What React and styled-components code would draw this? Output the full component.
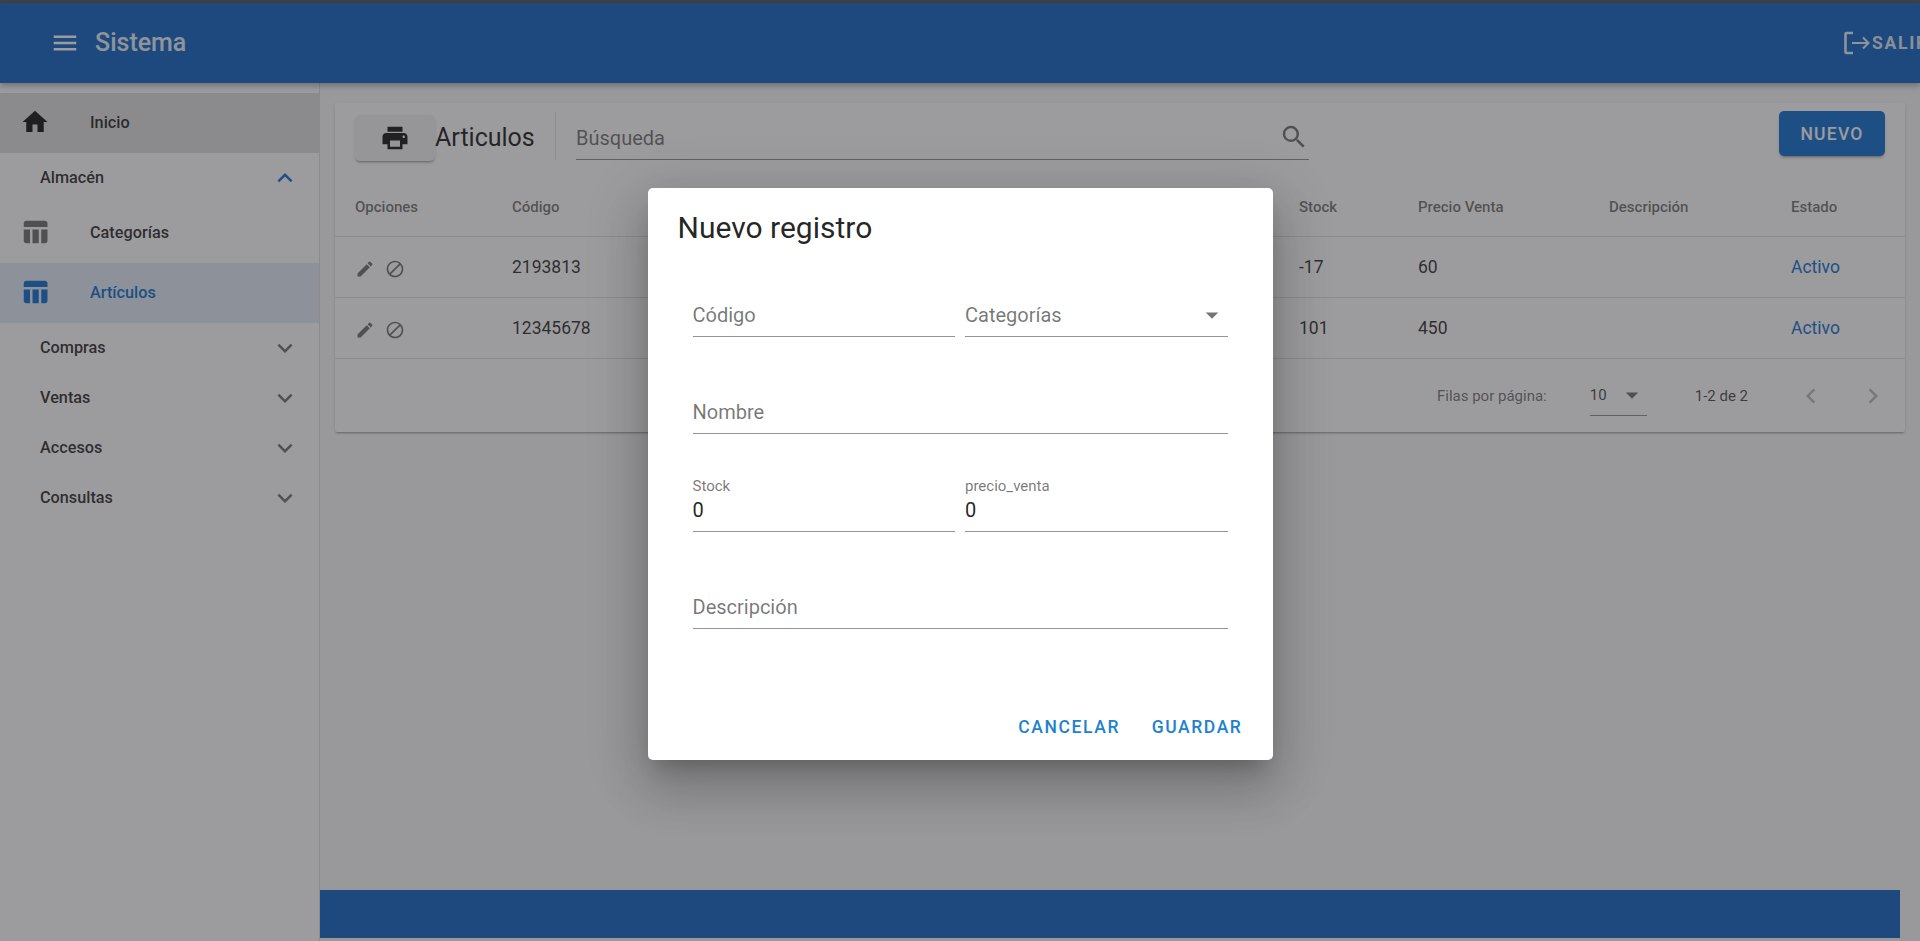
import React from 'react';
import styled, { createGlobalStyle } from 'styled-components';
import {
  MdMenu,
  MdHome,
  MdTableChart,
  MdPrint,
  MdSearch,
  MdEdit,
  MdBlock,
  MdExpandLess,
  MdExpandMore,
  MdArrowDropDown,
  MdChevronLeft,
  MdChevronRight,
} from 'react-icons/md';

const PRIMARY = '#1976d2';
const BAR = '#186bc6';

const rows = [
  { code: '2193813', stock: '-17', price: '60' },
  { code: '12345678', stock: '101', price: '450' },
];

const groups = ['Compras', 'Ventas', 'Accesos', 'Consultas'];

function App() {
  return (
    <Page>
      <GlobalStyle />
      <TopStrip />
      <AppBar>
        <MenuIcon />
        <Brand>Sistema</Brand>
        <Exit>
          <svg width="27" height="26" viewBox="0 0 27 26" fill="none" stroke="currentColor">
            <path d="M10 3H3.5a1 1 0 0 0-1 1v18a1 1 0 0 0 1 1H10" strokeWidth="2.6" />
            <path d="M9 13h16M20 7.5l5.5 5.5-5.5 5.5" strokeWidth="2" />
          </svg>
          <ExitLabel>SALIR</ExitLabel>
        </Exit>
      </AppBar>
      <Body>
        <Sidebar>
          <NavTile $tone="grey">
            <NavIcon $tone="dark"><MdHome /></NavIcon>
            Inicio
          </NavTile>
          <GroupHeader>
            Almacén
            <GroupArrow $open><MdExpandLess /></GroupArrow>
          </GroupHeader>
          <NavTile>
            <NavIcon><MdTableChart /></NavIcon>
            Categorías
          </NavTile>
          <NavTile $tone="active">
            <NavIcon $tone="active"><MdTableChart /></NavIcon>
            Artículos
          </NavTile>
          {groups.map((g) => (
            <GroupHeader key={g}>
              {g}
              <GroupArrow><MdExpandMore /></GroupArrow>
            </GroupHeader>
          ))}
        </Sidebar>
        <Main>
          <Card>
            <Toolbar>
              <PrintButton><MdPrint /></PrintButton>
              <ToolbarTitle>Articulos</ToolbarTitle>
              <ToolbarDivider />
              <Search>
                <SearchInput placeholder="Búsqueda" />
                <SearchIcon />
              </Search>
              <NewButton>NUEVO</NewButton>
            </Toolbar>
            <HeadRow>
              <span>Opciones</span>
              <span>Código</span>
              <span>Stock</span>
              <span>Precio Venta</span>
              <span>Descripción</span>
              <span>Estado</span>
            </HeadRow>
            {rows.map((r) => (
              <DataRow key={r.code}>
                <Actions>
                  <MdEdit size={20} />
                  <MdBlock size={20} />
                </Actions>
                <span>{r.code}</span>
                <span>{r.stock}</span>
                <span>{r.price}</span>
                <span />
                <Status>Activo</Status>
              </DataRow>
            ))}
            <Pagination>
              <span>Filas por página:</span>
              <PageSize>
                10
                <MdArrowDropDown size={30} />
              </PageSize>
              <PageRange>1-2 de 2</PageRange>
              <PageArrows>
                <MdChevronLeft size={30} />
                <MdChevronRight size={30} />
              </PageArrows>
            </Pagination>
          </Card>
          <Footer />
        </Main>
      </Body>
      <Overlay>
        <Dialog>
          <DialogTitle>Nuevo registro</DialogTitle>
          <Form>
            <Field>
              <FieldInput placeholder="Código" />
            </Field>
            <Field>
              <FieldInput placeholder="Categorías" />
              <SelectArrow><MdArrowDropDown /></SelectArrow>
            </Field>
            <Field $wide>
              <FieldInput placeholder="Nombre" />
            </Field>
            <Field>
              <FieldLabel>Stock</FieldLabel>
              <FieldInput defaultValue="0" />
            </Field>
            <Field>
              <FieldLabel>precio_venta</FieldLabel>
              <FieldInput defaultValue="0" />
            </Field>
            <Field $wide>
              <FieldInput placeholder="Descripción" />
            </Field>
          </Form>
          <DialogActions>
            <TextButton>CANCELAR</TextButton>
            <TextButton>GUARDAR</TextButton>
          </DialogActions>
        </Dialog>
      </Overlay>
    </Page>
  );
}

export default App;

const GlobalStyle = createGlobalStyle`
  html, body {
    margin: 0;
    height: 100%;
    overflow: hidden;
  }
  body {
    font-family: Roboto, "Liberation Sans", sans-serif;
    background: #fafafa;
  }
  * {
    box-sizing: border-box;
  }
`;

const Page = styled.div`
  position: relative;
  display: flex;
  flex-direction: column;
  width: 1920px;
  height: 941px;
  overflow: hidden;
  background: #fafafa;
  color: rgba(0, 0, 0, 0.87);
`;

const TopStrip = styled.div`
  flex: none;
  height: 3px;
  background: #595a5c;
`;

const AppBar = styled.header`
  flex: none;
  position: relative;
  display: flex;
  align-items: center;
  height: 80px;
  padding-left: 50px;
  background: ${BAR};
  color: #fff;
  box-shadow: 0 3px 6px rgba(0, 0, 0, 0.3);
  z-index: 2;
`;

const MenuIcon = styled(MdMenu)`
  width: 30px;
  height: 30px;
`;

const Brand = styled.div`
  margin: -2px 0 0 15px;
  font-size: 25px;
  font-weight: 500;
  opacity: 0.9;
`;

const Exit = styled.div`
  display: flex;
  align-items: center;
  flex: none;
  gap: 2px;
  margin-left: auto;
  width: 77px;
  overflow: hidden;
  font-size: 17.5px;
  font-weight: 700;
  letter-spacing: 1.75px;
  opacity: 0.9;

  svg {
    flex: none;
  }
`;

const ExitLabel = styled.span`
  flex: none;
  opacity: 0.95;
`;

const Body = styled.div`
  flex: 1;
  display: flex;
  min-height: 0;
`;

const Sidebar = styled.nav`
  flex: none;
  width: 320px;
  padding-top: 10px;
  background: #fff;
  border-right: 1px solid rgba(0, 0, 0, 0.12);
`;

const NavTile = styled.div`
  display: flex;
  align-items: center;
  height: 60px;
  padding: 0 0 2px 20px;
  font-size: 16.25px;
  font-weight: 500;
  background: ${(p) =>
    p.$tone === 'grey'
      ? 'rgba(0, 0, 0, 0.12)'
      : p.$tone === 'active'
        ? 'rgba(25, 118, 210, 0.12)'
        : 'transparent'};
  color: ${(p) => (p.$tone === 'active' ? PRIMARY : 'rgba(0, 0, 0, 0.8)')};
`;

const NavIcon = styled.span`
  display: flex;
  width: 70px;
  font-size: 30px;
  color: ${(p) =>
    p.$tone === 'active'
      ? PRIMARY
      : p.$tone === 'dark'
        ? 'rgba(0, 0, 0, 0.87)'
        : 'rgba(0, 0, 0, 0.54)'};
`;

const GroupHeader = styled.div`
  display: flex;
  align-items: center;
  justify-content: space-between;
  height: 50px;
  padding: 0 19px 2px 40px;
  font-size: 16.25px;
  font-weight: 500;
  color: rgba(0, 0, 0, 0.8);
`;

const GroupArrow = styled.span`
  display: flex;
  font-size: 30px;
  margin-top: 1px;
  color: ${(p) => (p.$open ? PRIMARY : 'rgba(0, 0, 0, 0.54)')};
`;

const Main = styled.main`
  flex: 1;
  display: flex;
  flex-direction: column;
  min-width: 0;
  padding: 20px 20px 3px 0;
`;

const Card = styled.section`
  margin: 0 -5px 0 15px;
  background: #fff;
  border-radius: 2.5px;
  box-shadow: 0 2px 2px -1px rgba(0, 0, 0, 0.3), 0 1px 4px rgba(0, 0, 0, 0.12);
`;

const Toolbar = styled.div`
  display: flex;
  align-items: flex-start;
  height: 74px;
  padding: 8px 20px 0;
`;

const PrintButton = styled.button`
  display: flex;
  align-items: center;
  justify-content: center;
  width: 80px;
  height: 46px;
  margin-top: 4px;
  padding: 0;
  border: 0;
  border-radius: 5px;
  background: #f5f5f5;
  font-size: 30px;
  color: rgba(0, 0, 0, 0.87);
  box-shadow: 0 3px 2px -2px rgba(0, 0, 0, 0.25), 0 2px 3px rgba(0, 0, 0, 0.14);
`;

const ToolbarTitle = styled.div`
  width: 120px;
  margin-top: 8px;
  font-size: 25px;
  line-height: 38px;
`;

const ToolbarDivider = styled.div`
  width: 1px;
  height: 48px;
  margin-top: 1px;
  background: rgba(0, 0, 0, 0.12);
`;

const Search = styled.div`
  display: flex;
  align-items: center;
  width: 733px;
  height: 49px;
  margin-left: 20px;
  border-bottom: 1px solid rgba(0, 0, 0, 0.42);
`;

const SearchInput = styled.input`
  flex: 1;
  min-width: 0;
  padding: 5px 0 0;
  border: 0;
  outline: 0;
  background: transparent;
  font: 400 20px Roboto, sans-serif;
  &::placeholder {
    color: rgba(0, 0, 0, 0.54);
    opacity: 1;
  }
`;

const SearchIcon = styled(MdSearch)`
  flex: none;
  width: 30px;
  height: 30px;
  margin-top: 3px;
  color: rgba(0, 0, 0, 0.54);
`;

const NewButton = styled.button`
  width: 106px;
  height: 45px;
  margin-left: auto;
  padding: 0;
  border: 0;
  border-radius: 5px;
  background: ${PRIMARY};
  color: #fff;
  font: 500 17.5px Roboto, sans-serif;
  letter-spacing: 1.25px;
  box-shadow: 0 3px 2px -2px rgba(0, 0, 0, 0.25), 0 2px 3px rgba(0, 0, 0, 0.14);
`;

const gridColumns = '157px 787px 119px 191px 182px 1fr';

const HeadRow = styled.div`
  display: grid;
  grid-template-columns: ${gridColumns};
  align-items: center;
  height: 60px;
  padding-left: 20px;
  border-bottom: 1px solid rgba(0, 0, 0, 0.12);
  font-size: 15px;
  font-weight: 500;
  color: rgba(0, 0, 0, 0.54);
`;

const DataRow = styled.div`
  display: grid;
  grid-template-columns: ${gridColumns};
  align-items: center;
  height: 61px;
  padding-left: 20px;
  border-bottom: 1px solid rgba(0, 0, 0, 0.12);
  font-size: 17.5px;
  color: rgba(0, 0, 0, 0.8);
`;

const Actions = styled.div`
  display: flex;
  gap: 10px;
  padding-top: 4px;
  color: rgba(0, 0, 0, 0.54);
`;

const Status = styled.span`
  color: ${PRIMARY};
`;

const Pagination = styled.div`
  display: flex;
  align-items: center;
  justify-content: flex-end;
  height: 73px;
  padding-right: 17px;
  font-size: 15px;
  color: rgba(0, 0, 0, 0.54);
`;

const PageSize = styled.div`
  display: flex;
  align-items: center;
  justify-content: space-between;
  width: 57px;
  height: 41px;
  margin-left: 43px;
  border-bottom: 1px solid rgba(0, 0, 0, 0.42);
  color: rgba(0, 0, 0, 0.7);
  & svg {
    color: rgba(0, 0, 0, 0.54);
  }
`;

const PageRange = styled.span`
  margin-left: 48px;
  color: rgba(0, 0, 0, 0.7);
`;

const PageArrows = styled.div`
  display: flex;
  gap: 32px;
  margin-left: 48px;
  color: rgba(0, 0, 0, 0.26);
`;

const Footer = styled.footer`
  flex: none;
  height: 48px;
  margin-top: auto;
  background: ${BAR};
`;

const Overlay = styled.div`
  position: absolute;
  inset: 0;
  z-index: 5;
  display: flex;
  align-items: center;
  justify-content: center;
  padding-top: 7px;
  background: rgba(36, 33, 38, 0.45);
`;

const Dialog = styled.div`
  display: flex;
  flex-direction: column;
  width: 625px;
  height: 572px;
  background: #fff;
  border-radius: 5px;
  box-shadow: 0 14px 19px -9px rgba(0, 0, 0, 0.2), 0 30px 48px 4px rgba(0, 0, 0, 0.14),
    0 11px 58px 10px rgba(0, 0, 0, 0.12);
`;

const DialogTitle = styled.h2`
  flex: none;
  height: 51px;
  margin: 0;
  padding: 20px 0 0 30px;
  font-size: 30px;
  font-weight: 400;
  line-height: 40px;
`;

const Form = styled.div`
  display: grid;
  grid-template-columns: 1fr 1fr;
  grid-auto-rows: 97.5px;
  column-gap: 10px;
  padding: 0 45px;
`;

const Field = styled.div`
  position: relative;
  grid-column: ${(p) => (p.$wide ? '1 / -1' : 'auto')};
  display: flex;
  flex-direction: column;
  justify-content: flex-end;
`;

const FieldLabel = styled.label`
  margin-bottom: -4px;
  font-size: 15px;
  line-height: 18px;
  color: rgba(0, 0, 0, 0.54);
`;

const FieldInput = styled.input`
  width: 100%;
  height: 41px;
  padding: 0 0 2px;
  border: 0;
  border-bottom: 1px solid rgba(0, 0, 0, 0.42);
  outline: 0;
  background: transparent;
  font: 400 20px Roboto, sans-serif;
  color: rgba(0, 0, 0, 0.87);
  &::placeholder {
    color: rgba(0, 0, 0, 0.54);
    opacity: 1;
  }
`;

const SelectArrow = styled.span`
  position: absolute;
  right: 0;
  bottom: 7px;
  margin-right: 1px;
  display: flex;
  font-size: 30px;
  color: rgba(0, 0, 0, 0.54);
`;

const DialogActions = styled.div`
  display: flex;
  justify-content: flex-end;
  gap: 31.5px;
  margin-top: auto;
  padding: 0 30px 23px 0;
`;

const TextButton = styled.button`
  padding: 0;
  border: 0;
  background: transparent;
  color: #1e82cf;
  font: 500 17.5px/20px Roboto, sans-serif;
  letter-spacing: 1.6px;
`;
